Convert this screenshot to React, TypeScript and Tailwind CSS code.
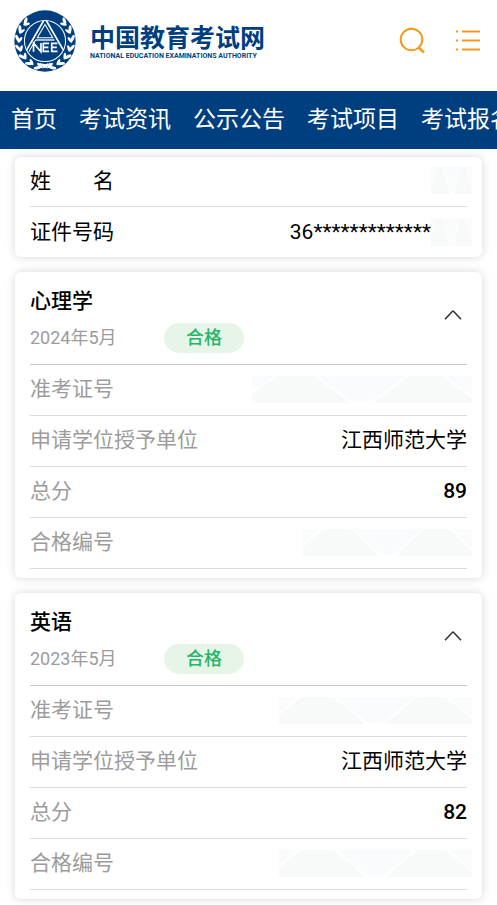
import { useState } from 'react';

const navItems = ['首页', '考试资讯', '公示公告', '考试项目', '考试报名'];

type Exam = { subject: string; date: string; school: string; score: string; ticketMask: string; certMask: string };

const exams: Exam[] = [
  { subject: '心理学', date: '2024年5月', school: '江西师范大学', score: '89', ticketMask: 'w-[220px]', certMask: 'w-[169px]' },
  { subject: '英语', date: '2023年5月', school: '江西师范大学', score: '82', ticketMask: 'w-[193px]', certMask: 'w-[193px]' },
];

const leafAngles = [24, 44, 64, 84, 104, 124, 144];

function Emblem() {
  return (
    <svg viewBox="0 0 184 184" className="size-[62px] shrink-0" role="img" aria-label="NEEA">
      <circle cx="92" cy="92" r="91" fill="#003f7f" />
      <circle cx="92" cy="92" r="61" fill="none" stroke="#fff" strokeWidth="3" />
      {[1, -1].map((side) => (
        <g key={side} transform={`translate(92 92) scale(${side} 1)`} fill="#fff">
          {leafAngles.map((a) => (
            <g key={a} transform={`rotate(${a - 70}) translate(76 0)`}>
              <ellipse cx="6" cy="-3" rx="4.5" ry="11" transform="rotate(28)" />
              <ellipse cx="-4" cy="3" rx="4" ry="10" transform="rotate(-30)" />
            </g>
          ))}
          <path d="M-10 68Q6 72 20 80M-8 80Q5 76 16 66" fill="none" stroke="#fff" strokeWidth="4" />
        </g>
      ))}
      <path d="M88 32 37 120M96 32l51 88" stroke="#fff" strokeWidth="5" />
      <path d="M92 43 69 82h46z" fill="none" stroke="#fff" strokeWidth="3" />
      <path d="M64 89h56" stroke="#fff" strokeWidth="4" />
      <path d="M64 89 44 124" stroke="#fff" strokeWidth="3" />
      <path d="M58 124V98l22 26V98M104 99H87v24h17M87 111h15M129 99h-17v24h17M112 111h15" fill="none" stroke="#fff" strokeWidth="5" />
    </svg>
  );
}

function Mask({ width }: { width: string }) {
  return (
    <svg viewBox="0 0 214 27" preserveAspectRatio="none" className={`-mr-[5px] h-[27px] shrink-0 ${width}`} aria-hidden="true">
      <path d="M0 0h214v27H0z" fill="#fafbfd" />
      <path d="M-3 22 26 0h36l36 27h18L152 0h34l30 22v5H-3z" fill="#f8faf9" />
      <path d="M-3 18 24-1M60-2l38 29h18l38-29M184-2l34 26" fill="none" stroke="#fefefe" strokeWidth="3" />
    </svg>
  );
}

function Card({ children }: { children: React.ReactNode }) {
  return <section className="rounded-md bg-white px-[15px] shadow-[0_0_10px_rgba(0,0,0,0.16)]">{children}</section>;
}

function ExamCard({ exam }: { exam: Exam }) {
  const [open, setOpen] = useState(true);
  const rows = [
    { label: '准考证号', value: <Mask width={exam.ticketMask} /> },
    { label: '申请学位授予单位', value: exam.school },
    { label: '总分', value: <span className="font-medium">{exam.score}</span> },
    { label: '合格编号', value: <Mask width={exam.certMask} /> },
  ];
  return (
    <Card>
      <div className="flex h-[93px] items-center justify-between border-b border-[#c8c8c8] pt-[4px]">
        <div>
          <h2 className="text-[21px] leading-[36px] font-medium">{exam.subject}</h2>
          <div className="flex h-[38px] items-center text-[18px]">
            <span className="w-[134px] text-[#9c9c9c]">{exam.date}</span>
            <span className="flex h-[30px] w-[80px] items-center justify-center rounded-full bg-[#e6f5e7] font-medium text-[#22b568]">合格</span>
          </div>
        </div>
        <button type="button" aria-label="展开或收起" aria-expanded={open} onClick={() => setOpen(!open)} className="mr-[5px] pb-[10px]">
          <svg viewBox="0 0 18 10" className="h-[10px] w-[18px]" fill="none" stroke="#333" strokeWidth="1.6">
            <path d="M1 9.200 8.300 1.500q.7-.6 1.400 0L17 9.200" />
          </svg>
        </button>
      </div>
      {open && (
        <dl className="pb-[9px]">
          {rows.map((row) => (
            <div key={row.label} className="flex h-[51px] items-center justify-between border-b border-[#ddd] pb-[2px]">
              <dt className="text-[#9c9c9c]">{row.label}</dt>
              <dd>{row.value}</dd>
            </div>
          ))}
        </dl>
      )}
    </Card>
  );
}

export default function App() {
  return (
    <div className="overflow-x-hidden bg-white pb-[6px] font-[Roboto,'Noto_Sans_CJK_SC',sans-serif] text-[21px] leading-[30px] text-black">
      <header className="flex h-[91px] items-start justify-between pt-[10px] pr-4 pl-[14px]">
        <a href="#home" className="flex items-center gap-[14px] text-[#003f7f]">
          <Emblem />
          <span className="flex flex-col whitespace-nowrap">
            <span className="font-['Noto_Sans_CJK_SC',sans-serif] text-[25px] leading-[30px] font-bold">中国教育考试网</span>
            <span className="text-[7px] leading-[10px] font-bold">NATIONAL EDUCATION EXAMINATIONS AUTHORITY</span>
          </span>
        </a>
        <div className="flex items-center gap-[30px] pt-[17px] text-[#f39a1e]">
          <button type="button" aria-label="搜索">
            <svg viewBox="0 0 27 27" className="size-[27px]" fill="none" stroke="currentColor" strokeWidth="2">
              <circle cx="12.500" cy="12.500" r="10.800" />
              <path d="m19.500 20.500 5.500 5" strokeWidth="2.400" />
            </svg>
          </button>
          <button type="button" aria-label="菜单">
            <svg viewBox="0 0 25 27" className="h-[27px] w-[25px]" stroke="currentColor" strokeWidth="1.800">
              <path d="M0 4.500h2M6 4.500h18M0 13.500h2M6 13.500h18M0 22.500h2M6 22.500h18" />
            </svg>
          </button>
        </div>
      </header>
      <nav className="flex h-[58px] items-center gap-[22px] overflow-hidden bg-[#003f7f] pl-[11px] text-[23px] whitespace-nowrap text-white">
        {navItems.map((item) => (
          <a key={item} href="#nav" className="shrink-0">{item}</a>
        ))}
      </nav>
      <main className="flex flex-col gap-[15px] px-[15px] pt-2">
        <Card>
          <dl>
            <div className="flex h-[50px] items-center justify-between border-b border-[#ddd] pb-[2px]">
              <dt className="flex w-[84px] justify-between"><span>姓</span><span>名</span></dt>
              <dd><Mask width="w-[41px]" /></dd>
            </div>
            <div className="flex h-[50px] items-center justify-between">
              <dt>证件号码</dt>
              <dd className="flex items-center">36*************<Mask width="w-[41px]" /></dd>
            </div>
          </dl>
        </Card>
        {exams.map((exam) => (
          <ExamCard key={exam.subject} exam={exam} />
        ))}
      </main>
    </div>
  );
}
